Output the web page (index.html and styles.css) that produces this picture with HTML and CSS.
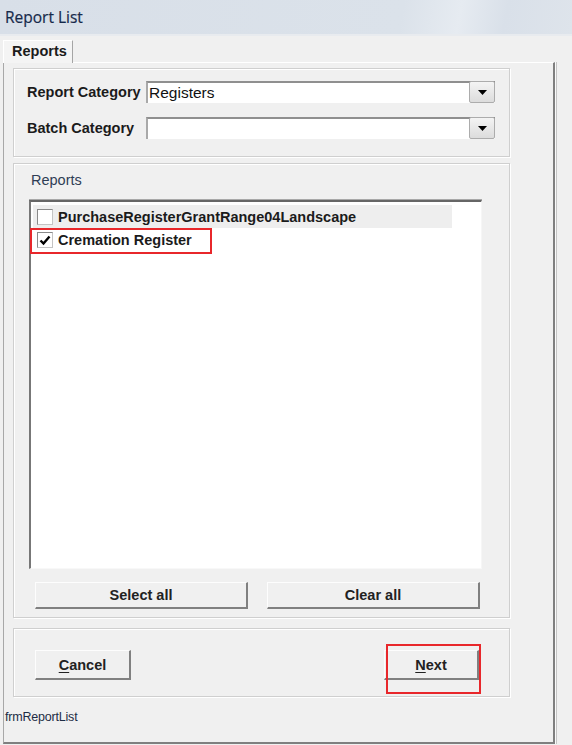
FILE: index.html
```html
<!DOCTYPE html>
<html lang="en">

<head>
    <meta charset="UTF-8">
    <meta name="viewport" content="width=device-width, initial-scale=1.0">
    <title>Report List</title>
    <link rel="stylesheet" href="styles.css">
</head>

<body>

    <div class="titlebar">Report List</div>

    <div class="tabs">
        <div class="tab">Reports</div>
    </div>

    <div class="page">
        <div class="group filters">
            <label class="field-label">Report Category</label>
            <div class="combo">
                <span class="combo-value">Registers</span>
                <span class="combo-btn">
                    <svg width="9" height="5" viewBox="0 0 9 5"><polygon points="0,0 9,0 4.5,5" fill="#000" /></svg>
                </span>
            </div>

            <label class="field-label">Batch Category</label>
            <div class="combo">
                <span class="combo-value"></span>
                <span class="combo-btn">
                    <svg width="9" height="5" viewBox="0 0 9 5"><polygon points="0,0 9,0 4.5,5" fill="#000" /></svg>
                </span>
            </div>
        </div>

        <div class="group reports">
            <div class="group-title">Reports</div>
            <div class="listbox">
                <div class="item item-current">
                    <span class="check"></span>
                    <span>PurchaseRegisterGrantRange04Landscape</span>
                </div>
                <div class="item">
                    <span class="check">
                        <svg width="14" height="14" viewBox="0 0 14 14"><path d="M2.5 7.5 L5.5 10.5 L11.5 3.5" fill="none" stroke="#000" stroke-width="2.4" /></svg>
                    </span>
                    <span>Cremation Register</span>
                </div>
                <span class="mark mark-item"></span>
            </div>
            <div class="list-actions">
                <button class="btn btn-wide">Select all</button>
                <button class="btn btn-wide">Clear all</button>
            </div>
        </div>

        <div class="group actions">
            <button class="btn btn-cancel"><u>C</u>ancel</button>
            <div class="next-wrap">
                <button class="btn btn-next"><u>N</u>ext</button>
                <span class="mark mark-next"></span>
            </div>
        </div>

        <div class="form-name">frmReportList</div>
    </div>

</body>

</html>
```

FILE: styles.css
```css
* {
    box-sizing: border-box;
    margin: 0;
    padding: 0;
}

html,
body {
    width: 572px;
    height: 745px;
    overflow: hidden;
    background-color: #f0f0f0;
}

body {
    font-family: "Liberation Sans", Arial, sans-serif;
    color: #1b1b1b;
}

/* window caption */
.titlebar {
    height: 36px;
    padding-left: 5px;
    line-height: 34px;
    font-family: "Open Sans", "Liberation Sans", sans-serif;
    font-size: 15.5px;
    color: #16294a;
    -webkit-text-stroke: 0.2px #16294a;
    background: linear-gradient(100deg, #d8dfe8 0%, #dbe2ea 70%, #e6ebf1 80%, #d9e0e9 88%, #dee4eb 100%);
    border-bottom: 2px solid #e8ebef;
}

/* tab strip */
.tabs {
    height: 26px;
    padding: 4px 0 0 3px;
}

.tab {
    position: relative;
    width: 70px;
    height: 23px;
    margin-bottom: -1px;
    padding-left: 8px;
    line-height: 21px;
    font-size: 14.5px;
    font-weight: bold;
    background-color: #f4f4f4;
    border-top: 1px solid #fff;
    border-left: 1px solid #fff;
    border-right: 1px solid #a5a5a5;
}

.page {
    margin-left: 3px;
    width: 552px;
    height: 682px;
    padding-top: 5px;
    border-top: 1px solid #fff;
    border-left: 1px solid #a8a8a8;
    border-right: 2px solid #7f7f7f;
    border-bottom: 2px solid #7f7f7f;
    box-shadow: 1px 0 0 #fafafa, 2px 0 0 #c4c4c4;
}

.group {
    margin-left: 9px;
    width: 497px;
    border: 1px solid #cfcfcf;
    box-shadow: inset 1px 1px 0 #fff, 1px 1px 0 #fff;
}

/* category filters */
.filters {
    height: 89px;
    padding: 12px 14px 0 13px;
    display: grid;
    grid-template-columns: 119px 1fr;
    grid-auto-rows: 22px;
    row-gap: 14px;
    align-items: center;
}

.field-label {
    font-size: 14.5px;
    font-weight: bold;
}

.combo {
    height: 22px;
    display: flex;
    align-items: center;
    background-color: #fff;
    border-top: 2px solid #8f8f8f;
    border-left: 2px solid #a9a9a9;
    font-size: 15.5px;
}

.combo-value {
    flex: 1;
    padding-left: 1px;
    color: #111;
}

.combo-btn {
    width: 26px;
    height: 22px;
    margin-top: -2px;
    display: flex;
    align-items: center;
    justify-content: center;
    border: 1px solid #acacac;
    border-radius: 2px;
    background: linear-gradient(#f4f4f4, #dcdcdc);
}

/* report list */
.reports {
    margin-top: 6px;
    height: 455px;
    padding: 6px 0 0 15px;
}

.group-title {
    height: 20px;
    margin: 0 0 10px 2px;
    line-height: 20px;
    font-size: 14.5px;
    color: #2f3d55;
}

.listbox {
    position: relative;
    width: 453px;
    height: 369px;
    padding: 3px 0 0 2px;
    background-color: #fff;
    border-top: 2px solid #666;
    border-left: 2px solid #777;
    border-right: 1px solid #f6f6f6;
    border-bottom: 1px solid #f8f8f8;
    box-shadow: 0 -1px 0 #a8a8a8;
}

.item {
    width: 419px;
    height: 23px;
    padding-left: 4px;
    display: flex;
    align-items: center;
    gap: 5px;
    font-size: 14.5px;
    font-weight: bold;
}

.item-current {
    background-color: #eeeeee;
}

.check {
    width: 16px;
    height: 16px;
    display: flex;
    align-items: center;
    justify-content: center;
    background-color: #fff;
    border: 1px solid;
    border-color: #8a8a8a #c4c4c4 #c4c4c4 #8a8a8a;
}

/* red annotation boxes */
.mark {
    position: absolute;
    border: 2px solid #e8272b;
    pointer-events: none;
}

.mark-item {
    left: -1px;
    top: 26px;
    width: 182px;
    height: 26px;
}

.list-actions {
    display: flex;
    gap: 19px;
    margin: 13px 0 0 6px;
}

.btn {
    height: 27px;
    font-family: inherit;
    font-size: 14.5px;
    font-weight: bold;
    color: #222;
    background-color: #f0f0f0;
    border-top: 1px solid #fdfdfd;
    border-left: 1px solid #fdfdfd;
    border-right: 2px solid #808080;
    border-bottom: 2px solid #808080;
}

.btn u {
    text-decoration-thickness: 1px;
    text-underline-offset: 2px;
}

.btn-wide {
    width: 213px;
}

/* bottom buttons */
.actions {
    margin-top: 10px;
    height: 69px;
    padding: 21px 30px 0 21px;
    display: flex;
    justify-content: space-between;
    align-items: flex-start;
}

.btn-cancel {
    width: 96px;
    height: 30px;
}

.next-wrap {
    position: relative;
}

.btn-next {
    width: 95px;
    height: 30px;
}

.mark-next {
    left: 2px;
    top: -6px;
    width: 95px;
    height: 50px;
}

.form-name {
    margin: 11px 0 0 1px;
    line-height: 18px;
    font-size: 12.5px;
    letter-spacing: -0.2px;
    color: #1d2c45;
}
```
